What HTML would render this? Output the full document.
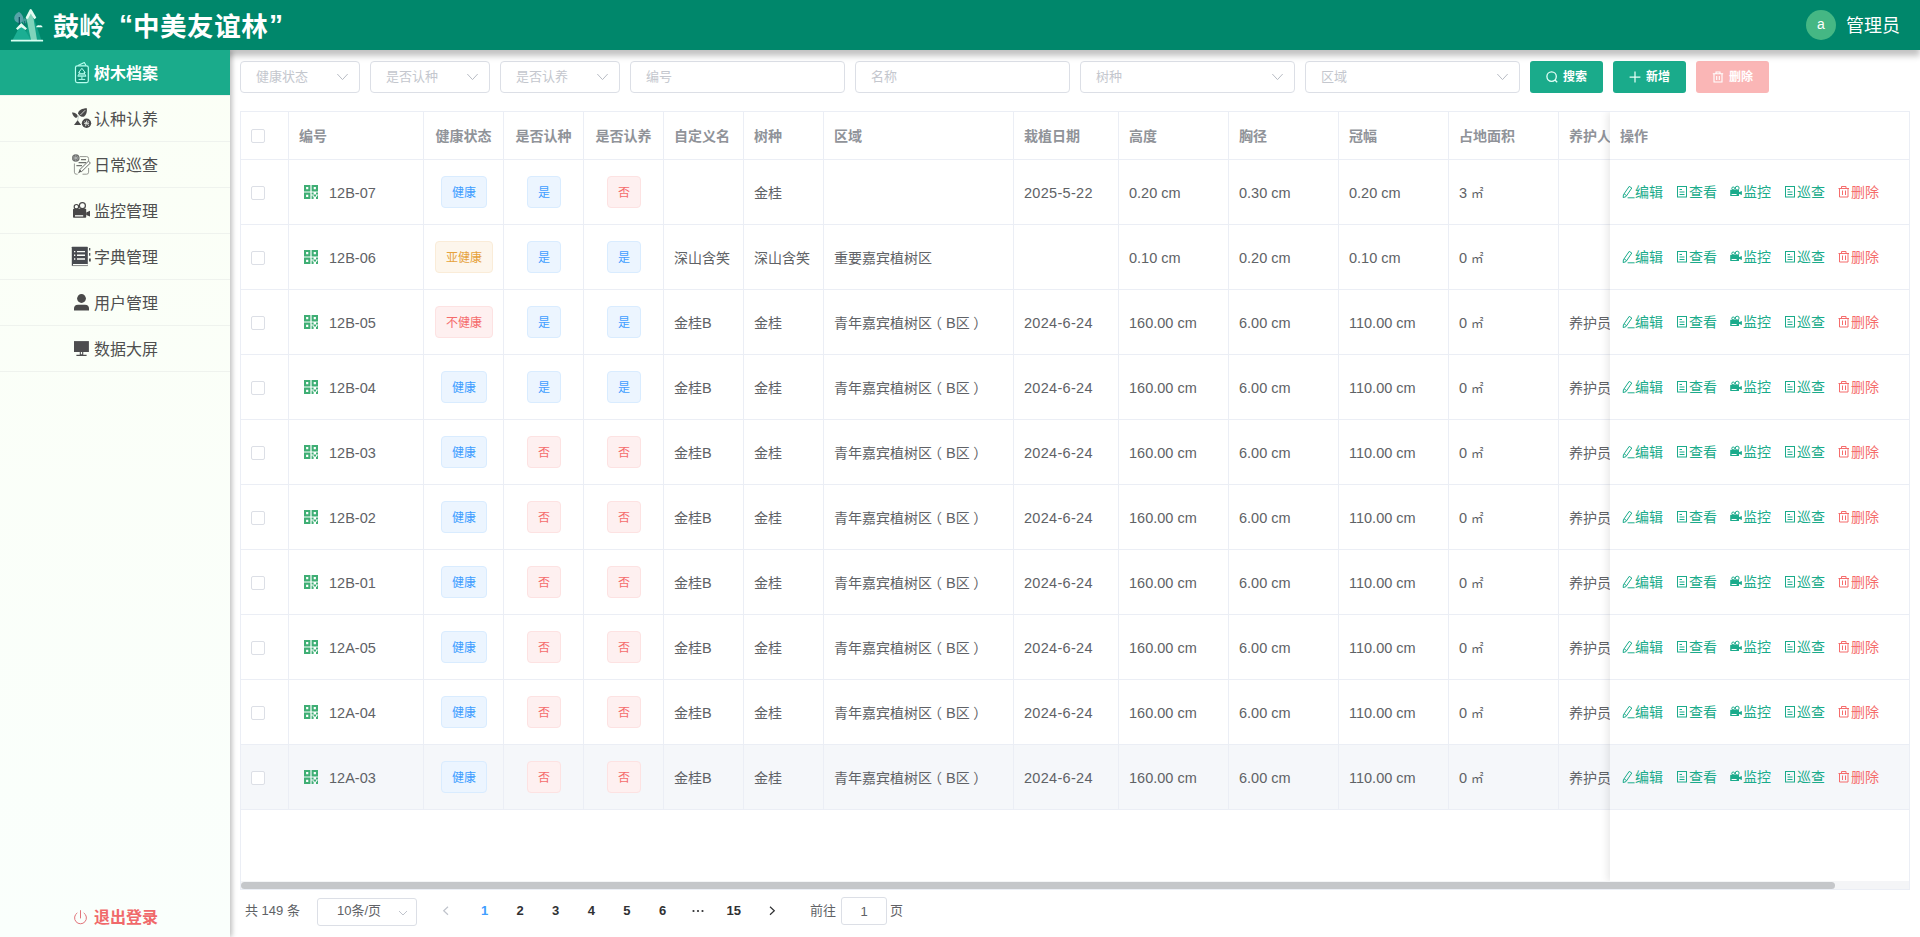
<!DOCTYPE html>
<html lang="zh-CN">
<head>
<meta charset="utf-8">
<title>鼓岭“中美友谊林”</title>
<style>
*{box-sizing:border-box;}
html,body{margin:0;padding:0;width:1920px;height:937px;overflow:hidden;background:#fff;
  font-family:"Liberation Sans","Noto Sans CJK SC",sans-serif;color:#606266;}
i,em,u,b{font-style:normal;font-weight:inherit;text-decoration:none;}
svg{display:block;overflow:visible;}
/* header */
#hdr{position:absolute;left:0;top:0;width:1920px;height:50px;background:#00876b;z-index:30;
  box-shadow:0 6px 6px rgba(0,0,0,.24);}
#hdr .title{position:absolute;left:0;top:0;height:50px;line-height:50px;font-size:26px;font-weight:700;color:#fff;white-space:nowrap;
  font-family:"Liberation Sans","Noto Sans CJK SC",sans-serif;letter-spacing:.3px;}
#hdr .title span{position:absolute;top:0;}
#hdr .title .t1{left:53px;top:2px;}
#hdr .title .q1{left:119px;font-size:28px;top:-.5px;}
#hdr .title .t2{left:133px;top:1.5px;font-size:26.5px;letter-spacing:.55px;}
#hdr .title .q2{left:269px;font-size:28px;top:-.5px;}
#hdr .logo{position:absolute;left:11px;top:9px;width:32px;height:33px;}
#hdr .avatar{position:absolute;left:1806px;top:10px;width:30px;height:30px;border-radius:50%;background:#45b784;color:#fff;font-size:14px;text-align:center;line-height:28px;}
#hdr .uname{position:absolute;left:1846px;top:1px;line-height:50px;font-size:18px;color:#fff;white-space:nowrap;}
/* sidebar */
#side{position:absolute;left:0;top:50px;width:230px;height:887px;background:linear-gradient(#fbfff6,#fafffc);z-index:40;
  box-shadow:2px 0 5px rgba(0,0,0,.26);clip-path:inset(0 -12px 0 0);}
#side .it{position:relative;height:46px;border-bottom:1px solid #eff3ee;font-size:16px;color:#4f4f4f;line-height:45px;}
#side .it.on{background:#1aab8b;color:#fff;font-weight:700;height:46px;}
#side .it span{position:absolute;left:94px;top:1px;white-space:nowrap;}
#side svg{position:absolute;}
#side .out{position:absolute;left:0;top:856px;width:230px;height:24px;font-size:16px;font-weight:700;color:#f0696a;line-height:24px;white-space:nowrap;}
#side .out span{position:absolute;left:94px;top:0;}
/* filters */
.inp{position:absolute;top:61px;height:32px;border:1px solid #dcdfe6;border-radius:4px;background:#fff;font-size:13px;color:#c4c7ce;line-height:29px;padding-left:15px;white-space:nowrap;}
.inp svg{position:absolute;right:9px;top:10px;}
.btn{position:absolute;top:61px;height:32px;width:73px;border-radius:3px;background:#1aab8b;color:#fff;font-size:12px;font-weight:700;line-height:31px;white-space:nowrap;}
.btn.dis{background:#fab6b6;}
.btn span{position:absolute;left:33px;top:1px;}
.btn svg{position:absolute;left:16px;top:9.5px;}
/* table */
#tbl{position:absolute;left:240px;top:111px;width:1670px;height:779px;border:1px solid #ebeef5;border-left-color:#ebeef5;overflow:hidden;}
.row{position:absolute;left:0;width:1669px;height:65px;border-bottom:1px solid #ebeef5;font-size:14px;color:#606266;}
.row.hd{top:0;height:48px;color:#909399;font-weight:700;}
.row.hd .c i{margin-top:-12px;}
.row.hd .ck{margin-top:-7px;}
.row.hv,.frow.hv{background:#f5f7fa;}
.c{position:absolute;top:0;height:100%;border-right:1px solid #ebeef5;white-space:nowrap;overflow:hidden;}
.c i{position:absolute;left:10px;top:50%;margin-top:-11px;line-height:24px;}
.la{font-size:14.5px;letter-spacing:0;}
.la.dt{letter-spacing:.3px;}
.m2{font-size:12.5px;}
.pl{position:relative;left:-4px;}
.pr{position:relative;left:3.5px;}
.ck{position:absolute;left:10px;top:50%;margin-top:-6px;width:14px;height:14px;border:1px solid #dcdfe6;border-radius:2px;background:#fff;}
.tag{position:absolute;top:16px;height:32px;line-height:32px;font-size:12px;border:1px solid #d9ecff;background:#ecf5ff;color:#409eff;border-radius:4px;text-align:center;}
.tag.r{border-color:#fde2e2;background:#fef0f0;color:#f56c6c;}
.tag.y{border-color:#faecd8;background:#fdf6ec;color:#e6a23c;}
.c svg.qr{position:absolute;left:15px;top:25px;}
#fix{position:absolute;left:1369px;top:0;width:300px;height:770px;background:#fff;box-shadow:-2px 0 8px rgba(0,0,0,.10);}
.frow{position:absolute;left:0;width:300px;height:65px;border-bottom:1px solid #ebeef5;font-size:14px;}
.frow.hd{color:#909399;font-weight:700;}
.frow.hd i{position:absolute;left:10px;top:12px;line-height:24px;}
.op{position:absolute;top:22px;height:20px;font-size:14px;color:#1aab8b;line-height:20px;white-space:nowrap;}
.op.d{color:#f56c6c;}
.op svg{position:absolute;left:0;top:3px;}
.op em{position:absolute;left:13px;top:0;}
#sbar{position:absolute;left:-1px;top:769px;width:1670px;height:9px;background:#f4f5f7;}
#thumb{position:absolute;left:1px;top:1px;width:1594px;height:7px;border-radius:4px;background:#c5c7ca;}
/* pagination */
#pg{position:absolute;left:240px;top:898px;height:28px;width:900px;font-size:13px;color:#606266;}
#pg .t{position:absolute;top:0;line-height:26px;white-space:nowrap;}
#pg .n{position:absolute;top:0;line-height:26px;font-weight:700;color:#303133;width:30px;text-align:center;}
#pg .n.cur{color:#409eff;}
#pg .n svg{position:absolute;left:9px;top:11px;}
#pg .ar{position:absolute;top:7px;}
#pg .psel{position:absolute;left:77px;top:0;width:100px;height:28px;border:1px solid #dcdfe6;border-radius:3px;line-height:24px;}
#pg .psel span{position:absolute;left:0;width:82px;text-align:center;}
#pg .psel svg{position:absolute;right:7px;top:8px;}
#pg .pinp{position:absolute;left:601px;top:-1px;width:46px;height:28px;border:1px solid #dcdfe6;border-radius:3px;line-height:28px;text-align:center;}

</style>
</head>
<body>
<div id="hdr">
<svg class="logo" style="left:0;top:0;width:50px;height:50px" viewBox="0 0 50 50">
<path d="M19 11.800 C21.800 13.800 23.800 17 23.400 19.800 C23 22.400 20.600 23.400 18 22.800 C15 22 13.800 19.400 14.400 16.800 C15 14.600 17 12.800 19 11.800 Z" fill="#56a3a8"/>
<ellipse cx="24.600" cy="21" rx="1.900" ry="2.800" fill="#3f9d97"/>
<path d="M19.300 17v8.500" stroke="#0b4a5c" stroke-width="1.200"/>
<path d="M24.600 21v4.500" stroke="#17686b" stroke-width=".9"/>
<path d="M31.500 11 L41.400 40 L24 40 Z" fill="#10a085"/>
<path d="M30.700 11.500 L26.600 19.500 L31 40 L37 40 L33.600 19 Z" fill="#7fd4bb"/>
<path d="M21.300 23.500 L30.800 40 L12.600 40 Z" fill="#1bae93"/>
<path d="M29.800 9.600 Q30.700 8.400 31.600 9.600 L36.300 17.400 L34.700 19.200 L33 17.600 L30.800 13.600 L28.200 18.400 L26.600 19.200 L25.700 17.600 Z" fill="#e4fbf1"/>
<path d="M21.200 23 L27 28.600 L25.400 30 L23.400 28.400 L21.400 27.200 L19.200 28.400 L17.600 30 L16 28.600 Z" fill="#e4fbf1"/>
<path d="M36.200 27.300 c0.200-1.600 1.800-2.600 3.200-1.800 c1.400-.6 3 .2 3.200 1.800 z" fill="#e9fff7"/>
<rect x="10.900" y="39.700" width="32.200" height="1.700" rx=".5" fill="#d6fff2"/>
</svg>
<div class="title"><span class="t1">鼓岭</span><span class="q1">“</span><span class="t2">中美友谊林</span><span class="q2">”</span></div>
<div class="avatar">a</div>
<div class="uname">管理员</div>
</div>
<div id="side">
<div class="it on"><svg style="left:0;top:0;width:230px;height:46px" viewBox="0 0 230 46">
<rect x="75.500" y="15.800" width="12.800" height="16.800" rx="1.800" fill="#0f9479" stroke="#b8fff0" stroke-width="1.200"/>
<path d="M78 15.600 L84.300 12.600 L86 15.600" fill="none" stroke="#b8fff0" stroke-width="1.100" stroke-linejoin="round"/>
<path d="M81.900 18.300 L85.200 22.600 L84 22.600 L86 26.200 L77.800 26.200 L79.800 22.600 L78.600 22.600 Z" fill="none" stroke="#b8fff0" stroke-width="1" stroke-linejoin="round"/>
<path d="M79.600 23.700h4.600M79 25h5.800M81.900 26.400v2.600M78.600 29.400h6.600" stroke="#b8fff0" stroke-width="1" fill="none"/>
</svg><span>树木档案</span></div>
<div class="it"><svg style="left:0;top:0;width:230px;height:46px" viewBox="0 0 230 46">
<path d="M86.900 12.300 C82 12.300 78.200 14.500 78.100 17.200 C79.200 20.400 82.600 21.400 84.200 20.600 C86.400 19 87.200 15.400 86.900 12.300 Z" fill="#4a4a4a"/>
<path d="M85.200 14.200 L80.400 19" stroke="#f4f8f2" stroke-width=".8"/>
<path d="M72 16.600 C74.400 16.200 77 17.800 77.800 20 C77.600 21.400 76.400 21.900 75.400 21.700 C73.600 20.900 72.400 18.800 72 16.600 Z" fill="#4a4a4a"/>
<path d="M78.600 19.500 L77.600 24.600" stroke="#c9d3cf" stroke-width="1.100"/>
<path d="M77.600 24.200 L81.200 29 L74 29 Z" fill="#4a4a4a"/>
<circle cx="86.500" cy="27.300" r="4.700" fill="#4a4a4a"/>
<path d="M84 27.300h5M86.900 24.400 L85.600 30.200M84.600 25.600l1 1M88.600 25.400l-.8 1.200M87.600 28.200 l1.200 1.600" stroke="#f4f8f2" stroke-width=".9" fill="none"/>
</svg><span>认种认养</span></div>
<div class="it"><svg style="left:0;top:0;width:230px;height:46px" viewBox="0 0 230 46">
<path d="M80 14.600 H86.600 Q88.600 14.600 88.600 16.600 V20.500 M88.600 26 V30.200 Q88.600 32.200 86.600 32.200 H82.500 M77.600 32.200 H76.400 Q74.400 32.200 74.400 30.200 V21.500" fill="none" stroke="#8a8c88" stroke-width=".9"/>
<path d="M81 17.600h5M78.600 20.600h7.400M76.400 23.600h5.600" stroke="#6f716e" stroke-width="1.100" fill="none"/>
<circle cx="75.800" cy="16" r="3.800" fill="#6a6c6b"/>
<path d="M73.400 14.200l4.800 3.600M78.200 14.200l-4.800 3.600M75.800 12.600v6.800M72.400 16h6.800" stroke="#b9bdbb" stroke-width=".7"/>
<path d="M88.400 19.200 L90.400 21 L81.600 29.600 L79.600 27.800 Z" fill="#fbfef9" stroke="#6f716e" stroke-width="1"/>
<path d="M79.600 27.800 L81.600 29.600 L78 31.600 Z" fill="#5d5f5c"/>
</svg><span>日常巡查</span></div>
<div class="it"><svg style="left:0;top:0;width:230px;height:46px" viewBox="0 0 230 46">
<rect x="73" y="20.700" width="13.200" height="9" rx=".8" fill="#474747"/>
<path d="M86.200 24.400 L90 22.800 V28.600 L86.200 27 Z" fill="#474747"/>
<rect x="75" y="27.200" width="8.200" height="1.300" fill="#fbfef9"/>
<circle cx="76.400" cy="18.700" r="2.200" fill="#fbfef9" stroke="#474747" stroke-width="1.200"/>
<circle cx="82.400" cy="17.700" r="3" fill="#fbfef9" stroke="#474747" stroke-width="1.200"/>
</svg><span>监控管理</span></div>
<div class="it"><svg style="left:0;top:0;width:230px;height:46px" viewBox="0 0 230 46">
<rect x="71.800" y="12.700" width="16" height="19.300" rx=".6" fill="#474a4f"/>
<rect x="73" y="30" width="14.800" height="1.200" fill="#fbfef9"/>
<rect x="72.400" y="31.200" width="15.400" height=".9" fill="#9a9c9a"/>
<path d="M74 17.600h1.300M77 17.600h8M74 21.300h1.300M77 21.300h8M74 25h1.300M77 25h8" stroke="#fbfef9" stroke-width="1.400" fill="none"/>
<path d="M89.700 14v2.600M89.700 19v2.800" stroke="#474a4f" stroke-width="1.200"/>
<path d="M89.900 24.400v3.200" stroke="#3d3d3d" stroke-width="1.600"/>
</svg><span>字典管理</span></div>
<div class="it"><svg style="left:0;top:0;width:230px;height:46px" viewBox="0 0 230 46">
<circle cx="81.500" cy="18.500" r="4.400" fill="#4a4a4a"/>
<path d="M74 30.500 V28.600 Q74 24.700 78 24.700 H85 Q89 24.700 89 28.600 V30.500 Z" fill="#4a4a4a"/>
</svg><span>用户管理</span></div>
<div class="it"><svg style="left:0;top:0;width:230px;height:46px" viewBox="0 0 230 46">
<rect x="74" y="15.100" width="14.900" height="10.900" fill="#4d4d4f"/>
<path d="M80.300 26v2.700h2.400V26M76.400 29.400h10.200" stroke="#4d4d4f" stroke-width="1.100" fill="none"/>
</svg><span>数据大屏</span></div>
<div class="out"><svg style="left:70px;top:-1px;width:22px;height:24px" viewBox="70 905 22 24">
<path d="M77.300 912.900 A5.900 5.900 0 1 0 83.700 912.900" fill="none" stroke="#e2747a" stroke-width="1"/>
<path d="M80.500 910.200v8.200" stroke="#e2747a" stroke-width="1"/>
</svg><span>退出登录</span></div>
</div>
<div id="main">
<div class="inp" style="left:240px;width:120px">健康状态<svg width="13" height="13" viewBox="0 0 13 13"><path d="M0.300 2 L5.500 7.600 L10.700 2" fill="none" stroke="#b9bdc5" stroke-width="1"/></svg></div>
<div class="inp" style="left:370px;width:120px">是否认种<svg width="13" height="13" viewBox="0 0 13 13"><path d="M0.300 2 L5.500 7.600 L10.700 2" fill="none" stroke="#b9bdc5" stroke-width="1"/></svg></div>
<div class="inp" style="left:500px;width:120px">是否认养<svg width="13" height="13" viewBox="0 0 13 13"><path d="M0.300 2 L5.500 7.600 L10.700 2" fill="none" stroke="#b9bdc5" stroke-width="1"/></svg></div>
<div class="inp" style="left:630px;width:215px">编号</div>
<div class="inp" style="left:855px;width:215px">名称</div>
<div class="inp" style="left:1080px;width:215px">树种<svg width="13" height="13" viewBox="0 0 13 13"><path d="M0.300 2 L5.500 7.600 L10.700 2" fill="none" stroke="#b9bdc5" stroke-width="1"/></svg></div>
<div class="inp" style="left:1305px;width:215px">区域<svg width="13" height="13" viewBox="0 0 13 13"><path d="M0.300 2 L5.500 7.600 L10.700 2" fill="none" stroke="#b9bdc5" stroke-width="1"/></svg></div>
<div class="btn" style="left:1530px"><svg width="12" height="12" viewBox="0 0 12 12"><circle cx="5.600" cy="5.600" r="4.700" fill="none" stroke="#e6fff8" stroke-width="1.300"/><path d="M9 9l2.200 2.200" stroke="#e6fff8" stroke-width="1.300"/></svg><span>搜索</span></div>
<div class="btn" style="left:1613px"><svg width="12" height="12" viewBox="0 0 12 12"><path d="M6 .6v10.800M.6 6h10.800" stroke="#e6fff8" stroke-width="1.250"/></svg><span>新增</span></div>
<div class="btn dis" style="left:1696px"><svg width="12" height="12" viewBox="0 0 12 12"><path d="M.8 2.800h10.400M4 2.600V1h4v1.600M2 3v8h8V3M4.700 5v4M7.300 5v4" fill="none" stroke="#fff" stroke-width="1.100"/></svg><span>删除</span></div>
<div id="tbl">
<div class="row hd"><div class="c" style="left:0px;width:48px"><u class="ck"></u></div><div class="c" style="left:48px;width:135px"><i>编号</i></div><div class="c" style="left:183px;width:80px"><i style="left:0;width:100%;text-align:center">健康状态</i></div><div class="c" style="left:263px;width:80px"><i style="left:0;width:100%;text-align:center">是否认种</i></div><div class="c" style="left:343px;width:80px"><i style="left:0;width:100%;text-align:center">是否认养</i></div><div class="c" style="left:423px;width:80px"><i>自定义名</i></div><div class="c" style="left:503px;width:80px"><i>树种</i></div><div class="c" style="left:583px;width:190px"><i>区域</i></div><div class="c" style="left:773px;width:105px"><i>栽植日期</i></div><div class="c" style="left:878px;width:110px"><i>高度</i></div><div class="c" style="left:988px;width:110px"><i>胸径</i></div><div class="c" style="left:1098px;width:110px"><i>冠幅</i></div><div class="c" style="left:1208px;width:110px"><i>占地面积</i></div><div class="c" style="left:1318px;width:110px"><i>养护人</i></div></div>
<div class="row" style="top:48px"><div class="c" style="left:0px;width:48px"><u class="ck"></u></div><div class="c" style="left:48px;width:135px"><svg class="qr" width="14" height="14" viewBox="0 0 14 14">
<path fill="#3fae74" d="M0 0h6.400v6.400H0zM7.600 0H14v6.400H7.600zM0 7.600h6.400V14H0z"/>
<path fill="#fff" d="M2.100 2.100h2.200v2.200H2.100zM9.700 2.100h2.200v2.200H9.700zM2.100 9.700h2.200v2.200H2.100z"/>
<path fill="#3fae74" d="M7.600 7.600h2v2h-2zM12 7.600h2v2h-2zM9.600 9.600h2.400v2h-2.400zM7.600 12h2v2h-2zM12 12h2v2h-2zM7.600 10.400h1.200v1.600H7.600zM12.800 10.400H14v1.600h-1.200z"/>
</svg><i class="la" style="left:40px">12B-07</i></div><div class="c" style="left:183px;width:80px"><b class="tag" style="left:17px;width:46px">健康</b></div><div class="c" style="left:263px;width:80px"><b class="tag" style="left:23px;width:34px">是</b></div><div class="c" style="left:343px;width:80px"><b class="tag r" style="left:23px;width:34px">否</b></div><div class="c" style="left:423px;width:80px"></div><div class="c" style="left:503px;width:80px"><i>金桂</i></div><div class="c" style="left:583px;width:190px"></div><div class="c" style="left:773px;width:105px"><i class="la dt">2025-5-22</i></div><div class="c" style="left:878px;width:110px"><i class="la">0.20 cm</i></div><div class="c" style="left:988px;width:110px"><i class="la">0.30 cm</i></div><div class="c" style="left:1098px;width:110px"><i class="la">0.20 cm</i></div><div class="c" style="left:1208px;width:110px"><i class="la">3 <span class="m2">㎡</span></i></div><div class="c" style="left:1318px;width:110px"></div></div>
<div class="row" style="top:113px"><div class="c" style="left:0px;width:48px"><u class="ck"></u></div><div class="c" style="left:48px;width:135px"><svg class="qr" width="14" height="14" viewBox="0 0 14 14">
<path fill="#3fae74" d="M0 0h6.400v6.400H0zM7.600 0H14v6.400H7.600zM0 7.600h6.400V14H0z"/>
<path fill="#fff" d="M2.100 2.100h2.200v2.200H2.100zM9.700 2.100h2.200v2.200H9.700zM2.100 9.700h2.200v2.200H2.100z"/>
<path fill="#3fae74" d="M7.600 7.600h2v2h-2zM12 7.600h2v2h-2zM9.600 9.600h2.400v2h-2.400zM7.600 12h2v2h-2zM12 12h2v2h-2zM7.600 10.400h1.200v1.600H7.600zM12.800 10.400H14v1.600h-1.200z"/>
</svg><i class="la" style="left:40px">12B-06</i></div><div class="c" style="left:183px;width:80px"><b class="tag y" style="left:11px;width:58px">亚健康</b></div><div class="c" style="left:263px;width:80px"><b class="tag" style="left:23px;width:34px">是</b></div><div class="c" style="left:343px;width:80px"><b class="tag" style="left:23px;width:34px">是</b></div><div class="c" style="left:423px;width:80px"><i>深山含笑</i></div><div class="c" style="left:503px;width:80px"><i>深山含笑</i></div><div class="c" style="left:583px;width:190px"><i>重要嘉宾植树区</i></div><div class="c" style="left:773px;width:105px"></div><div class="c" style="left:878px;width:110px"><i class="la">0.10 cm</i></div><div class="c" style="left:988px;width:110px"><i class="la">0.20 cm</i></div><div class="c" style="left:1098px;width:110px"><i class="la">0.10 cm</i></div><div class="c" style="left:1208px;width:110px"><i class="la">0 <span class="m2">㎡</span></i></div><div class="c" style="left:1318px;width:110px"></div></div>
<div class="row" style="top:178px"><div class="c" style="left:0px;width:48px"><u class="ck"></u></div><div class="c" style="left:48px;width:135px"><svg class="qr" width="14" height="14" viewBox="0 0 14 14">
<path fill="#3fae74" d="M0 0h6.400v6.400H0zM7.600 0H14v6.400H7.600zM0 7.600h6.400V14H0z"/>
<path fill="#fff" d="M2.100 2.100h2.200v2.200H2.100zM9.700 2.100h2.200v2.200H9.700zM2.100 9.700h2.200v2.200H2.100z"/>
<path fill="#3fae74" d="M7.600 7.600h2v2h-2zM12 7.600h2v2h-2zM9.600 9.600h2.400v2h-2.400zM7.600 12h2v2h-2zM12 12h2v2h-2zM7.600 10.400h1.200v1.600H7.600zM12.800 10.400H14v1.600h-1.200z"/>
</svg><i class="la" style="left:40px">12B-05</i></div><div class="c" style="left:183px;width:80px"><b class="tag r" style="left:11px;width:58px">不健康</b></div><div class="c" style="left:263px;width:80px"><b class="tag" style="left:23px;width:34px">是</b></div><div class="c" style="left:343px;width:80px"><b class="tag" style="left:23px;width:34px">是</b></div><div class="c" style="left:423px;width:80px"><i>金桂<span class="la">B</span></i></div><div class="c" style="left:503px;width:80px"><i>金桂</i></div><div class="c" style="left:583px;width:190px"><i>青年嘉宾植树区<span class="pl">（</span><span class="la">B</span>区<span class="pr">）</span></i></div><div class="c" style="left:773px;width:105px"><i class="la dt">2024-6-24</i></div><div class="c" style="left:878px;width:110px"><i class="la">160.00 cm</i></div><div class="c" style="left:988px;width:110px"><i class="la">6.00 cm</i></div><div class="c" style="left:1098px;width:110px"><i class="la">110.00 cm</i></div><div class="c" style="left:1208px;width:110px"><i class="la">0 <span class="m2">㎡</span></i></div><div class="c" style="left:1318px;width:110px"><i>养护员</i></div></div>
<div class="row" style="top:243px"><div class="c" style="left:0px;width:48px"><u class="ck"></u></div><div class="c" style="left:48px;width:135px"><svg class="qr" width="14" height="14" viewBox="0 0 14 14">
<path fill="#3fae74" d="M0 0h6.400v6.400H0zM7.600 0H14v6.400H7.600zM0 7.600h6.400V14H0z"/>
<path fill="#fff" d="M2.100 2.100h2.200v2.200H2.100zM9.700 2.100h2.200v2.200H9.700zM2.100 9.700h2.200v2.200H2.100z"/>
<path fill="#3fae74" d="M7.600 7.600h2v2h-2zM12 7.600h2v2h-2zM9.600 9.600h2.400v2h-2.400zM7.600 12h2v2h-2zM12 12h2v2h-2zM7.600 10.400h1.200v1.600H7.600zM12.800 10.400H14v1.600h-1.200z"/>
</svg><i class="la" style="left:40px">12B-04</i></div><div class="c" style="left:183px;width:80px"><b class="tag" style="left:17px;width:46px">健康</b></div><div class="c" style="left:263px;width:80px"><b class="tag" style="left:23px;width:34px">是</b></div><div class="c" style="left:343px;width:80px"><b class="tag" style="left:23px;width:34px">是</b></div><div class="c" style="left:423px;width:80px"><i>金桂<span class="la">B</span></i></div><div class="c" style="left:503px;width:80px"><i>金桂</i></div><div class="c" style="left:583px;width:190px"><i>青年嘉宾植树区<span class="pl">（</span><span class="la">B</span>区<span class="pr">）</span></i></div><div class="c" style="left:773px;width:105px"><i class="la dt">2024-6-24</i></div><div class="c" style="left:878px;width:110px"><i class="la">160.00 cm</i></div><div class="c" style="left:988px;width:110px"><i class="la">6.00 cm</i></div><div class="c" style="left:1098px;width:110px"><i class="la">110.00 cm</i></div><div class="c" style="left:1208px;width:110px"><i class="la">0 <span class="m2">㎡</span></i></div><div class="c" style="left:1318px;width:110px"><i>养护员</i></div></div>
<div class="row" style="top:308px"><div class="c" style="left:0px;width:48px"><u class="ck"></u></div><div class="c" style="left:48px;width:135px"><svg class="qr" width="14" height="14" viewBox="0 0 14 14">
<path fill="#3fae74" d="M0 0h6.400v6.400H0zM7.600 0H14v6.400H7.600zM0 7.600h6.400V14H0z"/>
<path fill="#fff" d="M2.100 2.100h2.200v2.200H2.100zM9.700 2.100h2.200v2.200H9.700zM2.100 9.700h2.200v2.200H2.100z"/>
<path fill="#3fae74" d="M7.600 7.600h2v2h-2zM12 7.600h2v2h-2zM9.600 9.600h2.400v2h-2.400zM7.600 12h2v2h-2zM12 12h2v2h-2zM7.600 10.400h1.200v1.600H7.600zM12.800 10.400H14v1.600h-1.200z"/>
</svg><i class="la" style="left:40px">12B-03</i></div><div class="c" style="left:183px;width:80px"><b class="tag" style="left:17px;width:46px">健康</b></div><div class="c" style="left:263px;width:80px"><b class="tag r" style="left:23px;width:34px">否</b></div><div class="c" style="left:343px;width:80px"><b class="tag r" style="left:23px;width:34px">否</b></div><div class="c" style="left:423px;width:80px"><i>金桂<span class="la">B</span></i></div><div class="c" style="left:503px;width:80px"><i>金桂</i></div><div class="c" style="left:583px;width:190px"><i>青年嘉宾植树区<span class="pl">（</span><span class="la">B</span>区<span class="pr">）</span></i></div><div class="c" style="left:773px;width:105px"><i class="la dt">2024-6-24</i></div><div class="c" style="left:878px;width:110px"><i class="la">160.00 cm</i></div><div class="c" style="left:988px;width:110px"><i class="la">6.00 cm</i></div><div class="c" style="left:1098px;width:110px"><i class="la">110.00 cm</i></div><div class="c" style="left:1208px;width:110px"><i class="la">0 <span class="m2">㎡</span></i></div><div class="c" style="left:1318px;width:110px"><i>养护员</i></div></div>
<div class="row" style="top:373px"><div class="c" style="left:0px;width:48px"><u class="ck"></u></div><div class="c" style="left:48px;width:135px"><svg class="qr" width="14" height="14" viewBox="0 0 14 14">
<path fill="#3fae74" d="M0 0h6.400v6.400H0zM7.600 0H14v6.400H7.600zM0 7.600h6.400V14H0z"/>
<path fill="#fff" d="M2.100 2.100h2.200v2.200H2.100zM9.700 2.100h2.200v2.200H9.700zM2.100 9.700h2.200v2.200H2.100z"/>
<path fill="#3fae74" d="M7.600 7.600h2v2h-2zM12 7.600h2v2h-2zM9.600 9.600h2.400v2h-2.400zM7.600 12h2v2h-2zM12 12h2v2h-2zM7.600 10.400h1.200v1.600H7.600zM12.800 10.400H14v1.600h-1.200z"/>
</svg><i class="la" style="left:40px">12B-02</i></div><div class="c" style="left:183px;width:80px"><b class="tag" style="left:17px;width:46px">健康</b></div><div class="c" style="left:263px;width:80px"><b class="tag r" style="left:23px;width:34px">否</b></div><div class="c" style="left:343px;width:80px"><b class="tag r" style="left:23px;width:34px">否</b></div><div class="c" style="left:423px;width:80px"><i>金桂<span class="la">B</span></i></div><div class="c" style="left:503px;width:80px"><i>金桂</i></div><div class="c" style="left:583px;width:190px"><i>青年嘉宾植树区<span class="pl">（</span><span class="la">B</span>区<span class="pr">）</span></i></div><div class="c" style="left:773px;width:105px"><i class="la dt">2024-6-24</i></div><div class="c" style="left:878px;width:110px"><i class="la">160.00 cm</i></div><div class="c" style="left:988px;width:110px"><i class="la">6.00 cm</i></div><div class="c" style="left:1098px;width:110px"><i class="la">110.00 cm</i></div><div class="c" style="left:1208px;width:110px"><i class="la">0 <span class="m2">㎡</span></i></div><div class="c" style="left:1318px;width:110px"><i>养护员</i></div></div>
<div class="row" style="top:438px"><div class="c" style="left:0px;width:48px"><u class="ck"></u></div><div class="c" style="left:48px;width:135px"><svg class="qr" width="14" height="14" viewBox="0 0 14 14">
<path fill="#3fae74" d="M0 0h6.400v6.400H0zM7.600 0H14v6.400H7.600zM0 7.600h6.400V14H0z"/>
<path fill="#fff" d="M2.100 2.100h2.200v2.200H2.100zM9.700 2.100h2.200v2.200H9.700zM2.100 9.700h2.200v2.200H2.100z"/>
<path fill="#3fae74" d="M7.600 7.600h2v2h-2zM12 7.600h2v2h-2zM9.600 9.600h2.400v2h-2.400zM7.600 12h2v2h-2zM12 12h2v2h-2zM7.600 10.400h1.200v1.600H7.600zM12.800 10.400H14v1.600h-1.200z"/>
</svg><i class="la" style="left:40px">12B-01</i></div><div class="c" style="left:183px;width:80px"><b class="tag" style="left:17px;width:46px">健康</b></div><div class="c" style="left:263px;width:80px"><b class="tag r" style="left:23px;width:34px">否</b></div><div class="c" style="left:343px;width:80px"><b class="tag r" style="left:23px;width:34px">否</b></div><div class="c" style="left:423px;width:80px"><i>金桂<span class="la">B</span></i></div><div class="c" style="left:503px;width:80px"><i>金桂</i></div><div class="c" style="left:583px;width:190px"><i>青年嘉宾植树区<span class="pl">（</span><span class="la">B</span>区<span class="pr">）</span></i></div><div class="c" style="left:773px;width:105px"><i class="la dt">2024-6-24</i></div><div class="c" style="left:878px;width:110px"><i class="la">160.00 cm</i></div><div class="c" style="left:988px;width:110px"><i class="la">6.00 cm</i></div><div class="c" style="left:1098px;width:110px"><i class="la">110.00 cm</i></div><div class="c" style="left:1208px;width:110px"><i class="la">0 <span class="m2">㎡</span></i></div><div class="c" style="left:1318px;width:110px"><i>养护员</i></div></div>
<div class="row" style="top:503px"><div class="c" style="left:0px;width:48px"><u class="ck"></u></div><div class="c" style="left:48px;width:135px"><svg class="qr" width="14" height="14" viewBox="0 0 14 14">
<path fill="#3fae74" d="M0 0h6.400v6.400H0zM7.600 0H14v6.400H7.600zM0 7.600h6.400V14H0z"/>
<path fill="#fff" d="M2.100 2.100h2.200v2.200H2.100zM9.700 2.100h2.200v2.200H9.700zM2.100 9.700h2.200v2.200H2.100z"/>
<path fill="#3fae74" d="M7.600 7.600h2v2h-2zM12 7.600h2v2h-2zM9.600 9.600h2.400v2h-2.400zM7.600 12h2v2h-2zM12 12h2v2h-2zM7.600 10.400h1.200v1.600H7.600zM12.800 10.400H14v1.600h-1.200z"/>
</svg><i class="la" style="left:40px">12A-05</i></div><div class="c" style="left:183px;width:80px"><b class="tag" style="left:17px;width:46px">健康</b></div><div class="c" style="left:263px;width:80px"><b class="tag r" style="left:23px;width:34px">否</b></div><div class="c" style="left:343px;width:80px"><b class="tag r" style="left:23px;width:34px">否</b></div><div class="c" style="left:423px;width:80px"><i>金桂<span class="la">B</span></i></div><div class="c" style="left:503px;width:80px"><i>金桂</i></div><div class="c" style="left:583px;width:190px"><i>青年嘉宾植树区<span class="pl">（</span><span class="la">B</span>区<span class="pr">）</span></i></div><div class="c" style="left:773px;width:105px"><i class="la dt">2024-6-24</i></div><div class="c" style="left:878px;width:110px"><i class="la">160.00 cm</i></div><div class="c" style="left:988px;width:110px"><i class="la">6.00 cm</i></div><div class="c" style="left:1098px;width:110px"><i class="la">110.00 cm</i></div><div class="c" style="left:1208px;width:110px"><i class="la">0 <span class="m2">㎡</span></i></div><div class="c" style="left:1318px;width:110px"><i>养护员</i></div></div>
<div class="row" style="top:568px"><div class="c" style="left:0px;width:48px"><u class="ck"></u></div><div class="c" style="left:48px;width:135px"><svg class="qr" width="14" height="14" viewBox="0 0 14 14">
<path fill="#3fae74" d="M0 0h6.400v6.400H0zM7.600 0H14v6.400H7.600zM0 7.600h6.400V14H0z"/>
<path fill="#fff" d="M2.100 2.100h2.200v2.200H2.100zM9.700 2.100h2.200v2.200H9.700zM2.100 9.700h2.200v2.200H2.100z"/>
<path fill="#3fae74" d="M7.600 7.600h2v2h-2zM12 7.600h2v2h-2zM9.600 9.600h2.400v2h-2.400zM7.600 12h2v2h-2zM12 12h2v2h-2zM7.600 10.400h1.200v1.600H7.600zM12.800 10.400H14v1.600h-1.200z"/>
</svg><i class="la" style="left:40px">12A-04</i></div><div class="c" style="left:183px;width:80px"><b class="tag" style="left:17px;width:46px">健康</b></div><div class="c" style="left:263px;width:80px"><b class="tag r" style="left:23px;width:34px">否</b></div><div class="c" style="left:343px;width:80px"><b class="tag r" style="left:23px;width:34px">否</b></div><div class="c" style="left:423px;width:80px"><i>金桂<span class="la">B</span></i></div><div class="c" style="left:503px;width:80px"><i>金桂</i></div><div class="c" style="left:583px;width:190px"><i>青年嘉宾植树区<span class="pl">（</span><span class="la">B</span>区<span class="pr">）</span></i></div><div class="c" style="left:773px;width:105px"><i class="la dt">2024-6-24</i></div><div class="c" style="left:878px;width:110px"><i class="la">160.00 cm</i></div><div class="c" style="left:988px;width:110px"><i class="la">6.00 cm</i></div><div class="c" style="left:1098px;width:110px"><i class="la">110.00 cm</i></div><div class="c" style="left:1208px;width:110px"><i class="la">0 <span class="m2">㎡</span></i></div><div class="c" style="left:1318px;width:110px"><i>养护员</i></div></div>
<div class="row hv" style="top:633px"><div class="c" style="left:0px;width:48px"><u class="ck"></u></div><div class="c" style="left:48px;width:135px"><svg class="qr" width="14" height="14" viewBox="0 0 14 14">
<path fill="#3fae74" d="M0 0h6.400v6.400H0zM7.600 0H14v6.400H7.600zM0 7.600h6.400V14H0z"/>
<path fill="#fff" d="M2.100 2.100h2.200v2.200H2.100zM9.700 2.100h2.200v2.200H9.700zM2.100 9.700h2.200v2.200H2.100z"/>
<path fill="#3fae74" d="M7.600 7.600h2v2h-2zM12 7.600h2v2h-2zM9.600 9.600h2.400v2h-2.400zM7.600 12h2v2h-2zM12 12h2v2h-2zM7.600 10.400h1.200v1.600H7.600zM12.800 10.400H14v1.600h-1.200z"/>
</svg><i class="la" style="left:40px">12A-03</i></div><div class="c" style="left:183px;width:80px"><b class="tag" style="left:17px;width:46px">健康</b></div><div class="c" style="left:263px;width:80px"><b class="tag r" style="left:23px;width:34px">否</b></div><div class="c" style="left:343px;width:80px"><b class="tag r" style="left:23px;width:34px">否</b></div><div class="c" style="left:423px;width:80px"><i>金桂<span class="la">B</span></i></div><div class="c" style="left:503px;width:80px"><i>金桂</i></div><div class="c" style="left:583px;width:190px"><i>青年嘉宾植树区<span class="pl">（</span><span class="la">B</span>区<span class="pr">）</span></i></div><div class="c" style="left:773px;width:105px"><i class="la dt">2024-6-24</i></div><div class="c" style="left:878px;width:110px"><i class="la">160.00 cm</i></div><div class="c" style="left:988px;width:110px"><i class="la">6.00 cm</i></div><div class="c" style="left:1098px;width:110px"><i class="la">110.00 cm</i></div><div class="c" style="left:1208px;width:110px"><i class="la">0 <span class="m2">㎡</span></i></div><div class="c" style="left:1318px;width:110px"><i>养护员</i></div></div>
<div id="fix"><div class="frow hd" style="top:0;height:48px"><i>操作</i></div><div class="frow" style="top:48px"><span class="op" style="left:12px"><svg width="14" height="14" viewBox="0 0 14 14"><path d="M7.200 1.400 L9.800 3 L4 11.600 L1.200 12.600 L1.400 9.800 Z M2.100 8.900 L4.600 10.600" fill="none" stroke="#1aab8b" stroke-width="1"/><path d="M5.600 12.800h7" stroke="#1aab8b" stroke-width="1"/></svg><em>编辑</em></span><span class="op" style="left:66px"><svg width="14" height="14" viewBox="0 0 14 14"><rect x="1.500" y="1.500" width="9" height="10.500" fill="none" stroke="#1aab8b" stroke-width="1"/><path d="M3.500 4.500h2.500M3.500 7h5M3.500 9.500h5" stroke="#1aab8b" stroke-width="1"/></svg><em>查看</em></span><span class="op" style="left:120px"><svg width="14" height="14" viewBox="0 0 14 14"><rect x=".2" y="4.800" width="8.800" height="6.200" rx=".6" fill="#1aab8b"/><path d="M8.800 7.300 L11.900 5.900 V10.100 L8.800 8.700 Z" fill="#1aab8b"/><rect x="1.600" y="9" width="5" height="1" fill="#fff"/><circle cx="3.200" cy="3.400" r="1.400" fill="#fff" stroke="#1aab8b" stroke-width="1"/><circle cx="7.200" cy="3.100" r="1.900" fill="#fff" stroke="#1aab8b" stroke-width="1"/></svg><em>监控</em></span><span class="op" style="left:174px"><svg width="14" height="14" viewBox="0 0 14 14"><rect x="1.500" y="1.500" width="9" height="10.500" fill="none" stroke="#1aab8b" stroke-width="1"/><path d="M3.500 4.500h2.500M3.500 7h5M3.500 9.500h5" stroke="#1aab8b" stroke-width="1"/></svg><em>巡查</em></span><span class="op d" style="left:228px"><svg width="14" height="14" viewBox="0 0 14 14"><path d="M.5 3.500h10.500M3.500 3.500V1.500h4.500v2M1.500 3.500v8.500h8.500v-8.500M4.500 5.500v4.500M7.500 5.500v4.500" fill="none" stroke="#f56c6c" stroke-width="1"/></svg><em>删除</em></span></div><div class="frow" style="top:113px"><span class="op" style="left:12px"><svg width="14" height="14" viewBox="0 0 14 14"><path d="M7.200 1.400 L9.800 3 L4 11.600 L1.200 12.600 L1.400 9.800 Z M2.100 8.900 L4.600 10.600" fill="none" stroke="#1aab8b" stroke-width="1"/><path d="M5.600 12.800h7" stroke="#1aab8b" stroke-width="1"/></svg><em>编辑</em></span><span class="op" style="left:66px"><svg width="14" height="14" viewBox="0 0 14 14"><rect x="1.500" y="1.500" width="9" height="10.500" fill="none" stroke="#1aab8b" stroke-width="1"/><path d="M3.500 4.500h2.500M3.500 7h5M3.500 9.500h5" stroke="#1aab8b" stroke-width="1"/></svg><em>查看</em></span><span class="op" style="left:120px"><svg width="14" height="14" viewBox="0 0 14 14"><rect x=".2" y="4.800" width="8.800" height="6.200" rx=".6" fill="#1aab8b"/><path d="M8.800 7.300 L11.900 5.900 V10.100 L8.800 8.700 Z" fill="#1aab8b"/><rect x="1.600" y="9" width="5" height="1" fill="#fff"/><circle cx="3.200" cy="3.400" r="1.400" fill="#fff" stroke="#1aab8b" stroke-width="1"/><circle cx="7.200" cy="3.100" r="1.900" fill="#fff" stroke="#1aab8b" stroke-width="1"/></svg><em>监控</em></span><span class="op" style="left:174px"><svg width="14" height="14" viewBox="0 0 14 14"><rect x="1.500" y="1.500" width="9" height="10.500" fill="none" stroke="#1aab8b" stroke-width="1"/><path d="M3.500 4.500h2.500M3.500 7h5M3.500 9.500h5" stroke="#1aab8b" stroke-width="1"/></svg><em>巡查</em></span><span class="op d" style="left:228px"><svg width="14" height="14" viewBox="0 0 14 14"><path d="M.5 3.500h10.500M3.500 3.500V1.500h4.500v2M1.500 3.500v8.500h8.500v-8.500M4.500 5.500v4.500M7.500 5.500v4.500" fill="none" stroke="#f56c6c" stroke-width="1"/></svg><em>删除</em></span></div><div class="frow" style="top:178px"><span class="op" style="left:12px"><svg width="14" height="14" viewBox="0 0 14 14"><path d="M7.200 1.400 L9.800 3 L4 11.600 L1.200 12.600 L1.400 9.800 Z M2.100 8.900 L4.600 10.600" fill="none" stroke="#1aab8b" stroke-width="1"/><path d="M5.600 12.800h7" stroke="#1aab8b" stroke-width="1"/></svg><em>编辑</em></span><span class="op" style="left:66px"><svg width="14" height="14" viewBox="0 0 14 14"><rect x="1.500" y="1.500" width="9" height="10.500" fill="none" stroke="#1aab8b" stroke-width="1"/><path d="M3.500 4.500h2.500M3.500 7h5M3.500 9.500h5" stroke="#1aab8b" stroke-width="1"/></svg><em>查看</em></span><span class="op" style="left:120px"><svg width="14" height="14" viewBox="0 0 14 14"><rect x=".2" y="4.800" width="8.800" height="6.200" rx=".6" fill="#1aab8b"/><path d="M8.800 7.300 L11.900 5.900 V10.100 L8.800 8.700 Z" fill="#1aab8b"/><rect x="1.600" y="9" width="5" height="1" fill="#fff"/><circle cx="3.200" cy="3.400" r="1.400" fill="#fff" stroke="#1aab8b" stroke-width="1"/><circle cx="7.200" cy="3.100" r="1.900" fill="#fff" stroke="#1aab8b" stroke-width="1"/></svg><em>监控</em></span><span class="op" style="left:174px"><svg width="14" height="14" viewBox="0 0 14 14"><rect x="1.500" y="1.500" width="9" height="10.500" fill="none" stroke="#1aab8b" stroke-width="1"/><path d="M3.500 4.500h2.500M3.500 7h5M3.500 9.500h5" stroke="#1aab8b" stroke-width="1"/></svg><em>巡查</em></span><span class="op d" style="left:228px"><svg width="14" height="14" viewBox="0 0 14 14"><path d="M.5 3.500h10.500M3.500 3.500V1.500h4.500v2M1.500 3.500v8.500h8.500v-8.500M4.500 5.500v4.500M7.500 5.500v4.500" fill="none" stroke="#f56c6c" stroke-width="1"/></svg><em>删除</em></span></div><div class="frow" style="top:243px"><span class="op" style="left:12px"><svg width="14" height="14" viewBox="0 0 14 14"><path d="M7.200 1.400 L9.800 3 L4 11.600 L1.200 12.600 L1.400 9.800 Z M2.100 8.900 L4.600 10.600" fill="none" stroke="#1aab8b" stroke-width="1"/><path d="M5.600 12.800h7" stroke="#1aab8b" stroke-width="1"/></svg><em>编辑</em></span><span class="op" style="left:66px"><svg width="14" height="14" viewBox="0 0 14 14"><rect x="1.500" y="1.500" width="9" height="10.500" fill="none" stroke="#1aab8b" stroke-width="1"/><path d="M3.500 4.500h2.500M3.500 7h5M3.500 9.500h5" stroke="#1aab8b" stroke-width="1"/></svg><em>查看</em></span><span class="op" style="left:120px"><svg width="14" height="14" viewBox="0 0 14 14"><rect x=".2" y="4.800" width="8.800" height="6.200" rx=".6" fill="#1aab8b"/><path d="M8.800 7.300 L11.900 5.900 V10.100 L8.800 8.700 Z" fill="#1aab8b"/><rect x="1.600" y="9" width="5" height="1" fill="#fff"/><circle cx="3.200" cy="3.400" r="1.400" fill="#fff" stroke="#1aab8b" stroke-width="1"/><circle cx="7.200" cy="3.100" r="1.900" fill="#fff" stroke="#1aab8b" stroke-width="1"/></svg><em>监控</em></span><span class="op" style="left:174px"><svg width="14" height="14" viewBox="0 0 14 14"><rect x="1.500" y="1.500" width="9" height="10.500" fill="none" stroke="#1aab8b" stroke-width="1"/><path d="M3.500 4.500h2.500M3.500 7h5M3.500 9.500h5" stroke="#1aab8b" stroke-width="1"/></svg><em>巡查</em></span><span class="op d" style="left:228px"><svg width="14" height="14" viewBox="0 0 14 14"><path d="M.5 3.500h10.500M3.500 3.500V1.500h4.500v2M1.500 3.500v8.500h8.500v-8.500M4.500 5.500v4.500M7.500 5.500v4.500" fill="none" stroke="#f56c6c" stroke-width="1"/></svg><em>删除</em></span></div><div class="frow" style="top:308px"><span class="op" style="left:12px"><svg width="14" height="14" viewBox="0 0 14 14"><path d="M7.200 1.400 L9.800 3 L4 11.600 L1.200 12.600 L1.400 9.800 Z M2.100 8.900 L4.600 10.600" fill="none" stroke="#1aab8b" stroke-width="1"/><path d="M5.600 12.800h7" stroke="#1aab8b" stroke-width="1"/></svg><em>编辑</em></span><span class="op" style="left:66px"><svg width="14" height="14" viewBox="0 0 14 14"><rect x="1.500" y="1.500" width="9" height="10.500" fill="none" stroke="#1aab8b" stroke-width="1"/><path d="M3.500 4.500h2.500M3.500 7h5M3.500 9.500h5" stroke="#1aab8b" stroke-width="1"/></svg><em>查看</em></span><span class="op" style="left:120px"><svg width="14" height="14" viewBox="0 0 14 14"><rect x=".2" y="4.800" width="8.800" height="6.200" rx=".6" fill="#1aab8b"/><path d="M8.800 7.300 L11.900 5.900 V10.100 L8.800 8.700 Z" fill="#1aab8b"/><rect x="1.600" y="9" width="5" height="1" fill="#fff"/><circle cx="3.200" cy="3.400" r="1.400" fill="#fff" stroke="#1aab8b" stroke-width="1"/><circle cx="7.200" cy="3.100" r="1.900" fill="#fff" stroke="#1aab8b" stroke-width="1"/></svg><em>监控</em></span><span class="op" style="left:174px"><svg width="14" height="14" viewBox="0 0 14 14"><rect x="1.500" y="1.500" width="9" height="10.500" fill="none" stroke="#1aab8b" stroke-width="1"/><path d="M3.500 4.500h2.500M3.500 7h5M3.500 9.500h5" stroke="#1aab8b" stroke-width="1"/></svg><em>巡查</em></span><span class="op d" style="left:228px"><svg width="14" height="14" viewBox="0 0 14 14"><path d="M.5 3.500h10.500M3.500 3.500V1.500h4.500v2M1.500 3.500v8.500h8.500v-8.500M4.500 5.500v4.500M7.500 5.500v4.500" fill="none" stroke="#f56c6c" stroke-width="1"/></svg><em>删除</em></span></div><div class="frow" style="top:373px"><span class="op" style="left:12px"><svg width="14" height="14" viewBox="0 0 14 14"><path d="M7.200 1.400 L9.800 3 L4 11.600 L1.200 12.600 L1.400 9.800 Z M2.100 8.900 L4.600 10.600" fill="none" stroke="#1aab8b" stroke-width="1"/><path d="M5.600 12.800h7" stroke="#1aab8b" stroke-width="1"/></svg><em>编辑</em></span><span class="op" style="left:66px"><svg width="14" height="14" viewBox="0 0 14 14"><rect x="1.500" y="1.500" width="9" height="10.500" fill="none" stroke="#1aab8b" stroke-width="1"/><path d="M3.500 4.500h2.500M3.500 7h5M3.500 9.500h5" stroke="#1aab8b" stroke-width="1"/></svg><em>查看</em></span><span class="op" style="left:120px"><svg width="14" height="14" viewBox="0 0 14 14"><rect x=".2" y="4.800" width="8.800" height="6.200" rx=".6" fill="#1aab8b"/><path d="M8.800 7.300 L11.900 5.900 V10.100 L8.800 8.700 Z" fill="#1aab8b"/><rect x="1.600" y="9" width="5" height="1" fill="#fff"/><circle cx="3.200" cy="3.400" r="1.400" fill="#fff" stroke="#1aab8b" stroke-width="1"/><circle cx="7.200" cy="3.100" r="1.900" fill="#fff" stroke="#1aab8b" stroke-width="1"/></svg><em>监控</em></span><span class="op" style="left:174px"><svg width="14" height="14" viewBox="0 0 14 14"><rect x="1.500" y="1.500" width="9" height="10.500" fill="none" stroke="#1aab8b" stroke-width="1"/><path d="M3.500 4.500h2.500M3.500 7h5M3.500 9.500h5" stroke="#1aab8b" stroke-width="1"/></svg><em>巡查</em></span><span class="op d" style="left:228px"><svg width="14" height="14" viewBox="0 0 14 14"><path d="M.5 3.500h10.500M3.500 3.500V1.500h4.500v2M1.500 3.500v8.500h8.500v-8.500M4.500 5.500v4.500M7.500 5.500v4.500" fill="none" stroke="#f56c6c" stroke-width="1"/></svg><em>删除</em></span></div><div class="frow" style="top:438px"><span class="op" style="left:12px"><svg width="14" height="14" viewBox="0 0 14 14"><path d="M7.200 1.400 L9.800 3 L4 11.600 L1.200 12.600 L1.400 9.800 Z M2.100 8.900 L4.600 10.600" fill="none" stroke="#1aab8b" stroke-width="1"/><path d="M5.600 12.800h7" stroke="#1aab8b" stroke-width="1"/></svg><em>编辑</em></span><span class="op" style="left:66px"><svg width="14" height="14" viewBox="0 0 14 14"><rect x="1.500" y="1.500" width="9" height="10.500" fill="none" stroke="#1aab8b" stroke-width="1"/><path d="M3.500 4.500h2.500M3.500 7h5M3.500 9.500h5" stroke="#1aab8b" stroke-width="1"/></svg><em>查看</em></span><span class="op" style="left:120px"><svg width="14" height="14" viewBox="0 0 14 14"><rect x=".2" y="4.800" width="8.800" height="6.200" rx=".6" fill="#1aab8b"/><path d="M8.800 7.300 L11.900 5.900 V10.100 L8.800 8.700 Z" fill="#1aab8b"/><rect x="1.600" y="9" width="5" height="1" fill="#fff"/><circle cx="3.200" cy="3.400" r="1.400" fill="#fff" stroke="#1aab8b" stroke-width="1"/><circle cx="7.200" cy="3.100" r="1.900" fill="#fff" stroke="#1aab8b" stroke-width="1"/></svg><em>监控</em></span><span class="op" style="left:174px"><svg width="14" height="14" viewBox="0 0 14 14"><rect x="1.500" y="1.500" width="9" height="10.500" fill="none" stroke="#1aab8b" stroke-width="1"/><path d="M3.500 4.500h2.500M3.500 7h5M3.500 9.500h5" stroke="#1aab8b" stroke-width="1"/></svg><em>巡查</em></span><span class="op d" style="left:228px"><svg width="14" height="14" viewBox="0 0 14 14"><path d="M.5 3.500h10.500M3.500 3.500V1.500h4.500v2M1.500 3.500v8.500h8.500v-8.500M4.500 5.500v4.500M7.500 5.500v4.500" fill="none" stroke="#f56c6c" stroke-width="1"/></svg><em>删除</em></span></div><div class="frow" style="top:503px"><span class="op" style="left:12px"><svg width="14" height="14" viewBox="0 0 14 14"><path d="M7.200 1.400 L9.800 3 L4 11.600 L1.200 12.600 L1.400 9.800 Z M2.100 8.900 L4.600 10.600" fill="none" stroke="#1aab8b" stroke-width="1"/><path d="M5.600 12.800h7" stroke="#1aab8b" stroke-width="1"/></svg><em>编辑</em></span><span class="op" style="left:66px"><svg width="14" height="14" viewBox="0 0 14 14"><rect x="1.500" y="1.500" width="9" height="10.500" fill="none" stroke="#1aab8b" stroke-width="1"/><path d="M3.500 4.500h2.500M3.500 7h5M3.500 9.500h5" stroke="#1aab8b" stroke-width="1"/></svg><em>查看</em></span><span class="op" style="left:120px"><svg width="14" height="14" viewBox="0 0 14 14"><rect x=".2" y="4.800" width="8.800" height="6.200" rx=".6" fill="#1aab8b"/><path d="M8.800 7.300 L11.900 5.900 V10.100 L8.800 8.700 Z" fill="#1aab8b"/><rect x="1.600" y="9" width="5" height="1" fill="#fff"/><circle cx="3.200" cy="3.400" r="1.400" fill="#fff" stroke="#1aab8b" stroke-width="1"/><circle cx="7.200" cy="3.100" r="1.900" fill="#fff" stroke="#1aab8b" stroke-width="1"/></svg><em>监控</em></span><span class="op" style="left:174px"><svg width="14" height="14" viewBox="0 0 14 14"><rect x="1.500" y="1.500" width="9" height="10.500" fill="none" stroke="#1aab8b" stroke-width="1"/><path d="M3.500 4.500h2.500M3.500 7h5M3.500 9.500h5" stroke="#1aab8b" stroke-width="1"/></svg><em>巡查</em></span><span class="op d" style="left:228px"><svg width="14" height="14" viewBox="0 0 14 14"><path d="M.5 3.500h10.500M3.500 3.500V1.500h4.500v2M1.500 3.500v8.500h8.500v-8.500M4.500 5.500v4.500M7.500 5.500v4.500" fill="none" stroke="#f56c6c" stroke-width="1"/></svg><em>删除</em></span></div><div class="frow" style="top:568px"><span class="op" style="left:12px"><svg width="14" height="14" viewBox="0 0 14 14"><path d="M7.200 1.400 L9.800 3 L4 11.600 L1.200 12.600 L1.400 9.800 Z M2.100 8.900 L4.600 10.600" fill="none" stroke="#1aab8b" stroke-width="1"/><path d="M5.600 12.800h7" stroke="#1aab8b" stroke-width="1"/></svg><em>编辑</em></span><span class="op" style="left:66px"><svg width="14" height="14" viewBox="0 0 14 14"><rect x="1.500" y="1.500" width="9" height="10.500" fill="none" stroke="#1aab8b" stroke-width="1"/><path d="M3.500 4.500h2.500M3.500 7h5M3.500 9.500h5" stroke="#1aab8b" stroke-width="1"/></svg><em>查看</em></span><span class="op" style="left:120px"><svg width="14" height="14" viewBox="0 0 14 14"><rect x=".2" y="4.800" width="8.800" height="6.200" rx=".6" fill="#1aab8b"/><path d="M8.800 7.300 L11.900 5.900 V10.100 L8.800 8.700 Z" fill="#1aab8b"/><rect x="1.600" y="9" width="5" height="1" fill="#fff"/><circle cx="3.200" cy="3.400" r="1.400" fill="#fff" stroke="#1aab8b" stroke-width="1"/><circle cx="7.200" cy="3.100" r="1.900" fill="#fff" stroke="#1aab8b" stroke-width="1"/></svg><em>监控</em></span><span class="op" style="left:174px"><svg width="14" height="14" viewBox="0 0 14 14"><rect x="1.500" y="1.500" width="9" height="10.500" fill="none" stroke="#1aab8b" stroke-width="1"/><path d="M3.500 4.500h2.500M3.500 7h5M3.500 9.500h5" stroke="#1aab8b" stroke-width="1"/></svg><em>巡查</em></span><span class="op d" style="left:228px"><svg width="14" height="14" viewBox="0 0 14 14"><path d="M.5 3.500h10.500M3.500 3.500V1.500h4.500v2M1.500 3.500v8.500h8.500v-8.500M4.500 5.500v4.500M7.500 5.500v4.500" fill="none" stroke="#f56c6c" stroke-width="1"/></svg><em>删除</em></span></div><div class="frow hv" style="top:633px"><span class="op" style="left:12px"><svg width="14" height="14" viewBox="0 0 14 14"><path d="M7.200 1.400 L9.800 3 L4 11.600 L1.200 12.600 L1.400 9.800 Z M2.100 8.900 L4.600 10.600" fill="none" stroke="#1aab8b" stroke-width="1"/><path d="M5.600 12.800h7" stroke="#1aab8b" stroke-width="1"/></svg><em>编辑</em></span><span class="op" style="left:66px"><svg width="14" height="14" viewBox="0 0 14 14"><rect x="1.500" y="1.500" width="9" height="10.500" fill="none" stroke="#1aab8b" stroke-width="1"/><path d="M3.500 4.500h2.500M3.500 7h5M3.500 9.500h5" stroke="#1aab8b" stroke-width="1"/></svg><em>查看</em></span><span class="op" style="left:120px"><svg width="14" height="14" viewBox="0 0 14 14"><rect x=".2" y="4.800" width="8.800" height="6.200" rx=".6" fill="#1aab8b"/><path d="M8.800 7.300 L11.900 5.900 V10.100 L8.800 8.700 Z" fill="#1aab8b"/><rect x="1.600" y="9" width="5" height="1" fill="#fff"/><circle cx="3.200" cy="3.400" r="1.400" fill="#fff" stroke="#1aab8b" stroke-width="1"/><circle cx="7.200" cy="3.100" r="1.900" fill="#fff" stroke="#1aab8b" stroke-width="1"/></svg><em>监控</em></span><span class="op" style="left:174px"><svg width="14" height="14" viewBox="0 0 14 14"><rect x="1.500" y="1.500" width="9" height="10.500" fill="none" stroke="#1aab8b" stroke-width="1"/><path d="M3.500 4.500h2.500M3.500 7h5M3.500 9.500h5" stroke="#1aab8b" stroke-width="1"/></svg><em>巡查</em></span><span class="op d" style="left:228px"><svg width="14" height="14" viewBox="0 0 14 14"><path d="M.5 3.500h10.500M3.500 3.500V1.500h4.500v2M1.500 3.500v8.500h8.500v-8.500M4.500 5.500v4.500M7.500 5.500v4.500" fill="none" stroke="#f56c6c" stroke-width="1"/></svg><em>删除</em></span></div></div>
<div id="sbar"><div id="thumb"></div></div>
</div>
<div id="pg">
<span class="t" style="left:5px">共 149 条</span>
<div class="psel"><span>10条/页</span><svg width="12" height="12" viewBox="0 0 12 12"><path d="M2 4 L6 8 L10 4" fill="none" stroke="#c0c4cc" stroke-width="1"/></svg></div>
<span class="ar" style="left:200px"><svg width="12" height="12" viewBox="0 0 12 12"><path d="M8 1.700 L3.700 5.700 L8 9.700" fill="none" stroke="#c0c4cc" stroke-width="1.200"/></svg></span>
<span class="n cur" style="left:229.5px">1</span>
<span class="n" style="left:265.1px">2</span>
<span class="n" style="left:300.7px">3</span>
<span class="n" style="left:336.3px">4</span>
<span class="n" style="left:371.9px">5</span>
<span class="n" style="left:407.5px">6</span>
<span class="n" style="left:443.1px"><svg width="12" height="4" viewBox="0 0 12 4"><circle cx="1.500" cy="2" r="1.100" fill="#303133"/><circle cx="6" cy="2" r="1.100" fill="#303133"/><circle cx="10.500" cy="2" r="1.100" fill="#303133"/></svg></span>
<span class="n" style="left:478.7px">15</span>
<span class="ar" style="left:526px"><svg width="12" height="12" viewBox="0 0 12 12"><path d="M4 1.700 L8.300 5.700 L4 9.700" fill="none" stroke="#303133" stroke-width="1.200"/></svg></span>
<span class="t" style="left:570px">前往</span>
<div class="pinp">1</div>
<span class="t" style="left:650px">页</span>
</div>
</div>
<div id="shadow-top"></div>
</body>
</html>
